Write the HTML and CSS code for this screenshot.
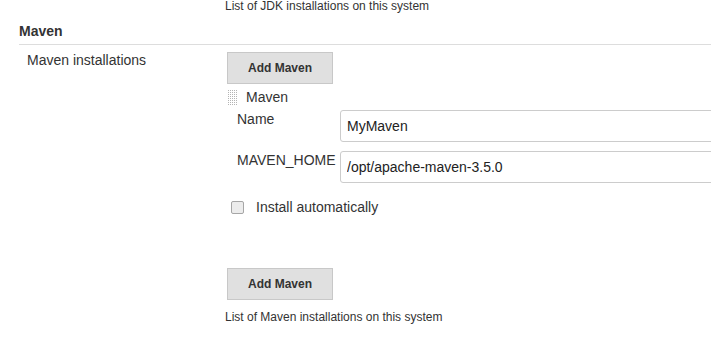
FILE: index.html
```html
<!DOCTYPE html>
<html lang="en">
<head>
  <meta charset="UTF-8">
  <title>Maven installations</title>
  <link rel="stylesheet" href="styles.css">
</head>
<body>
  <div class="help help-top">List of JDK installations on this system</div>

  <!-- Maven section -->
  <div class="section-header">Maven</div>

  <div class="setting-row">
    <div class="setting-name">Maven installations</div>
    <div class="setting-main">
      <button class="yui-button">Add Maven</button>

      <div class="repeated-chunk">
        <div class="chunk-head">
          <span class="dd-handle"></span>
          <span class="chunk-title">Maven</span>
        </div>
        <div class="field">
          <label class="field-label">Name</label>
          <input type="text" class="setting-input" value="MyMaven">
        </div>
        <div class="field">
          <label class="field-label">MAVEN_HOME</label>
          <input type="text" class="setting-input" value="/opt/apache-maven-3.5.0">
        </div>
        <div class="optional">
          <span class="checkbox"></span>
          <label>Install automatically</label>
        </div>
      </div>

      <button class="yui-button">Add Maven</button>
      <div class="help help-bottom">List of Maven installations on this system</div>
    </div>
  </div>
</body>
</html>
```

FILE: styles.css
```css
* {
  margin: 0;
  padding: 0;
  box-sizing: border-box;
}

body {
  font-family: "Liberation Sans", Arial, sans-serif;
  font-size: 14px;
  color: #333;
  background: #fff;
  width: 711px;
  height: 343px;
  overflow: hidden;
}

/* help texts */
.help {
  font-size: 12px;
  line-height: 16px;
  color: #333;
}

.help-top {
  margin: -2px 0 0 225px;
}

.help-bottom {
  margin: 9px 0 0 -2px;
}

/* section */
.section-header {
  margin: 8px 0 0 19px;
  padding-bottom: 4px;
  border-bottom: 1px solid #ddd;
  font-weight: bold;
  line-height: 18px;
  color: #333;
}

.setting-row {
  display: flex;
  overflow: hidden;
}

.setting-name {
  flex-shrink: 0;
  width: 227px;
  padding: 6px 0 0 27px;
  line-height: 18px;
}

.setting-main {
  flex: 1;
  min-width: 0;
  padding-top: 7px;
}

/* buttons */
.yui-button {
  display: block;
  width: 106px;
  height: 32px;
  background: #e0e0e0;
  border: 1px solid #c8c8c8;
  font-family: inherit;
  font-size: 12px;
  font-weight: bold;
  color: #333;
}

/* repeated chunk */
.repeated-chunk {
  margin: 4px 0 52px;
}

.chunk-head {
  display: flex;
  align-items: center;
  height: 18px;
  line-height: 18px;
}

.dd-handle {
  width: 11px;
  height: 17px;
  margin: 0 8px 0 0;
  background-image:
    linear-gradient(90deg, #fff 1px, transparent 1px),
    linear-gradient(#fff 1px, #b4b4b4 1px);
  background-size: 2px 2px, 2px 2px;
}

.field {
  display: flex;
  align-items: flex-start;
  margin-top: 4px;
  padding-left: 10px;
}

.field + .field {
  margin-top: 9px;
}

.field-label {
  flex-shrink: 0;
  width: 103px;
  line-height: 18px;
  color: #333;
}

.setting-input {
  flex-shrink: 0;
  width: 420px;
  height: 32px;
  padding: 0 6px;
  border: 1px solid #ccc;
  border-radius: 3px;
  font-family: inherit;
  font-size: 14px;
  color: #222;
}

.optional {
  display: flex;
  align-items: center;
  margin-top: 15px;
  padding-left: 4px;
  line-height: 18px;
}

.checkbox {
  width: 13px;
  height: 13px;
  margin-right: 12px;
  border: 1px solid #a6a6a6;
  border-radius: 2px;
  background: #ececec;
}
```
